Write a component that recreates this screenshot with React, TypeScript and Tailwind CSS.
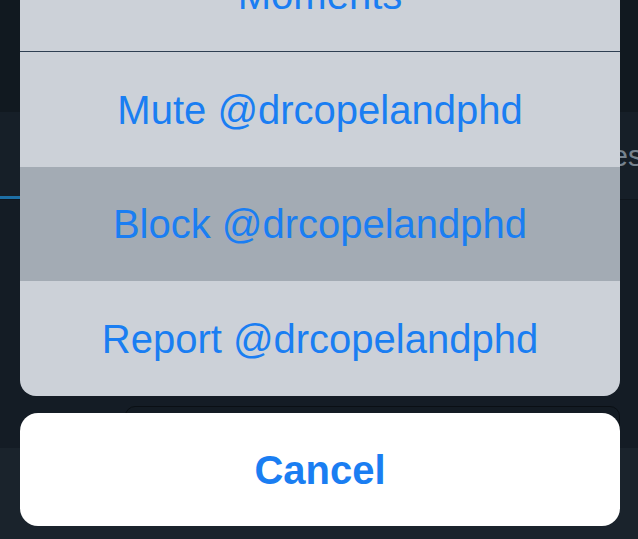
import React from "react";

// Action sheet shown over a dimmed profile screen
const actions = [
  { id: "moments", label: "Moments", h: "h-[114px] border-b border-[#2e3f52]" },
  { id: "mute", label: "Mute @drcopelandphd", h: "h-[115px]" },
  { id: "block", label: "Block @drcopelandphd", h: "h-[114px] bg-[#a3abb4]" },
  { id: "report", label: "Report @drcopelandphd", h: "h-[115px]" },
];

const App = () => {
  return (
    <div
      className="relative w-[638px] h-[539px] overflow-hidden bg-[#141c25]"
      style={{ fontFamily: '"Liberation Sans", Arial, sans-serif' }}
    >
      {/* dimmed page behind the sheet */}
      <div className="flex flex-col h-full">
        <div className="h-[112px] bg-[#111920]" />
        <div className="relative h-[88px] bg-[#161f28] border-b border-[#0f161d] flex items-center justify-end">
          <span className="text-[30px] text-[#77838e] mr-[-5px]">Likes</span>
          <div className="absolute left-0 bottom-0 w-[120px] h-[3px] bg-[#1d6fa5]" />
        </div>
        <div className="h-[248px] flex flex-col justify-end">
          <div className="ml-[125px] mr-[18px] h-[43px] rounded-t-[10px] border border-[#0a0f14] bg-[#131b23] mb-[-1px]" />
        </div>
        <div className="flex-1 bg-[#1a232c]" />
      </div>

      {/* action sheet */}
      <div className="absolute left-[20px] right-[18px] top-[-62px] flex flex-col gap-[17px]">
        <div className="rounded-[16px] overflow-hidden bg-[#ccd1d8]">
          {actions.map((a) => (
            <div
              key={a.id}
              className={`${a.h} flex items-center justify-center text-[40px] text-[#1a7ef2]`}
            >
              {a.label}
            </div>
          ))}
        </div>
        <button className="h-[113px] rounded-[18px] bg-white text-[40px] font-bold text-[#1a7ef2]">
          Cancel
        </button>
      </div>
    </div>
  );
};

export default App;
